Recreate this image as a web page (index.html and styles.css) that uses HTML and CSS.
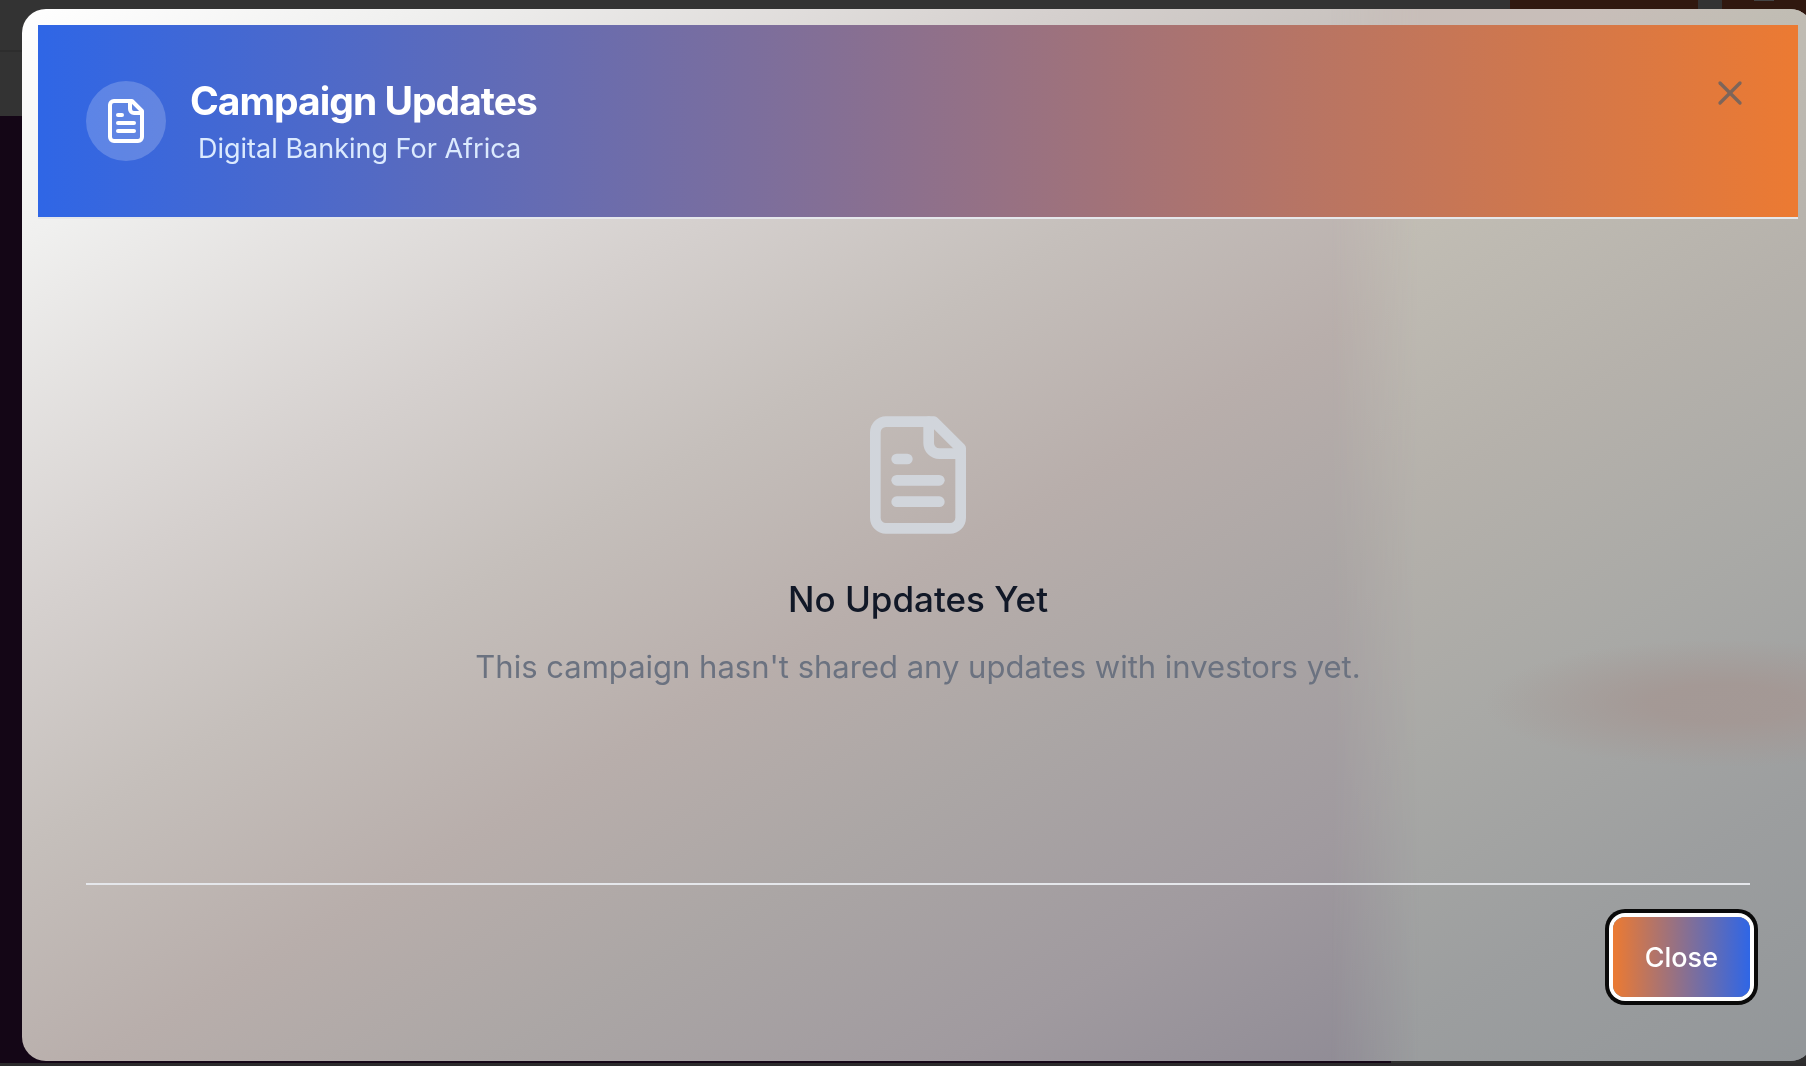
FILE: index.html
```html
<!DOCTYPE html>
<html lang="en">
<head>
  <meta charset="utf-8">
  <meta name="viewport" content="width=device-width, initial-scale=1">
  <title>Campaign Updates</title>
  <link rel="stylesheet" href="styles.css">
</head>
<body>
  <div class="page" aria-hidden="true">
    <div class="topbar">
      <div class="topbar-row">
        <span class="topbar-action"></span>
        <span class="topbar-action topbar-action-last"><span class="topbar-mark"></span></span>
      </div>
    </div>
    <div class="hero"></div>
    <div class="page-bottom"></div>
  </div>

  <div class="dialog" role="dialog" aria-modal="true" aria-labelledby="dialog-title">
    <header class="dialog-header">
      <span class="badge">
        <svg class="badge-icon" viewBox="0 0 24 24" aria-hidden="true">
          <path d="M15 2H6a2 2 0 0 0-2 2v16a2 2 0 0 0 2 2h12a2 2 0 0 0 2-2V7Z"/>
          <path d="M14 2v4a2 2 0 0 0 2 2h4"/>
          <path d="M10 9H8"/>
          <path d="M16 13H8"/>
          <path d="M16 17H8"/>
        </svg>
      </span>
      <div class="heading">
        <h1 class="title" id="dialog-title">Campaign Updates</h1>
        <p class="subtitle">Digital Banking For Africa</p>
      </div>
      <button class="dismiss" type="button" aria-label="Dismiss">
        <svg class="dismiss-icon" viewBox="0 0 24 24" aria-hidden="true">
          <path d="M18 6 6 18"/>
          <path d="m6 6 12 12"/>
        </svg>
      </button>
    </header>

    <main class="empty">
      <svg class="empty-icon" viewBox="0 0 24 24" aria-hidden="true">
        <path d="M15 2H6a2 2 0 0 0-2 2v16a2 2 0 0 0 2 2h12a2 2 0 0 0 2-2V7Z"/>
        <path d="M14 2v4a2 2 0 0 0 2 2h4"/>
        <path d="M10 9H8"/>
        <path d="M16 13H8"/>
        <path d="M16 17H8"/>
      </svg>
      <h2 class="empty-title">No Updates Yet</h2>
      <p class="empty-text">This campaign hasn't shared any updates with investors yet.</p>
    </main>

    <footer class="dialog-footer">
      <button class="close" type="button">Close</button>
    </footer>
  </div>
</body>
</html>
```
FILE: styles.css
```css
* {
  box-sizing: border-box;
  margin: 0;
}

body {
  overflow: hidden;
  background: #140616;
  font-family: Inter, "Liberation Sans", sans-serif;
}

svg {
  display: block;
  fill: none;
  stroke: currentColor;
  stroke-width: 2;
  stroke-linecap: round;
  stroke-linejoin: round;
}

/* Dimmed page behind the dialog */
.page {
  display: flex;
  flex-direction: column;
  height: 100vh;
}

.topbar {
  height: 116px;
  background: #333333;
}

.topbar-row {
  display: flex;
  justify-content: flex-end;
  gap: 24px;
  height: 52px;
  border-bottom: 2px solid #2d2d2d;
}

.topbar-action {
  width: 188px;
  height: 36px;
  background: #30180f;
}

.topbar-action-last {
  display: flex;
  justify-content: center;
  width: 84px;
}

.topbar-mark {
  width: 20px;
  height: 1px;
  background: #444444;
}

.hero {
  flex: 1;
  background: linear-gradient(to right, #140616 77%, #2e2e2e 77%);
}

.page-bottom {
  height: 3px;
  background: #2c2b2c;
}

/* Dialog */
.dialog {
  position: fixed;
  inset: 9px -8px 5px 22px;
  display: flex;
  flex-direction: column;
  padding: 16px;
  overflow: hidden;
  border-radius: 24px;
  background: linear-gradient(to bottom right, #ffffff 0%, #f0f0ef 11%, #d5d0ce 29%, #c5bfbb 40%, #b8aeab 52%, #aba6a5 63%, #a09a9f 76%, #8f8b95 88%, #8a8892 100%);
}

.dialog::before {
  content: "";
  position: absolute;
  inset: 0;
  z-index: -1;
  background:
    radial-gradient(ellipse 240px 64px at 95% 66%, rgba(164, 150, 146, 0.8) 30%, rgba(164, 152, 148, 0) 100%),
    linear-gradient(to bottom right, #c8beb9 44%, #c1bdb4 49%, #b5b1ab 62%, #a9a9a6 74%, #9c9e9f 87%, #929699 100%);
  mask-image: linear-gradient(to right, transparent 73%, #000000 78%);
}

.dialog-header {
  display: flex;
  gap: 24px;
  align-items: center;
  padding: 48px;
  border-bottom: 2px solid #e5e7eb;
  background: linear-gradient(to right, #2f66e6, #ec7a32) padding-box;
}

.badge {
  padding: 16px;
  border-radius: 50%;
  background: rgba(255, 255, 255, 0.2);
  color: #ffffff;
}

.badge-icon {
  width: 48px;
  height: 48px;
}

.heading {
  flex: 1;
}

.title {
  color: #ffffff;
  font-size: 39px;
  font-weight: 700;
  line-height: 56px;
  letter-spacing: -1px;
}

.subtitle {
  padding-left: 8px;
  color: #dbeafe;
  font-size: 27px;
  line-height: 40px;
}

.dismiss {
  align-self: flex-start;
  padding: 0;
  border: 0;
  background: none;
  color: #7d655a;
}

.dismiss-icon {
  width: 40px;
  height: 40px;
}

.empty {
  display: flex;
  flex: 1;
  flex-direction: column;
  align-items: center;
  justify-content: center;
  text-align: center;
}

.empty-icon {
  width: 128px;
  height: 128px;
  margin-bottom: 32px;
  color: #d1d5db;
}

.empty-title {
  margin-bottom: 16px;
  color: #111827;
  font-size: 35px;
  font-weight: 500;
  line-height: 56px;
}

.empty-text {
  color: #6b7280;
  font-size: 31px;
  line-height: 48px;
}

.dialog-footer {
  display: flex;
  justify-content: flex-end;
  margin: 0 48px 48px;
  padding-top: 32px;
  border-top: 2px solid #e5e7eb;
}

.close {
  height: 80px;
  padding: 0 32px;
  border: 0;
  border-radius: 12px;
  background: linear-gradient(to right, #ec7a32, #2f66e6);
  box-shadow: 0 0 0 4px #ffffff, 0 0 0 8px #0a0a0a;
  color: #ffffff;
  font: inherit;
  font-size: 27px;
  font-weight: 500;
}
```
